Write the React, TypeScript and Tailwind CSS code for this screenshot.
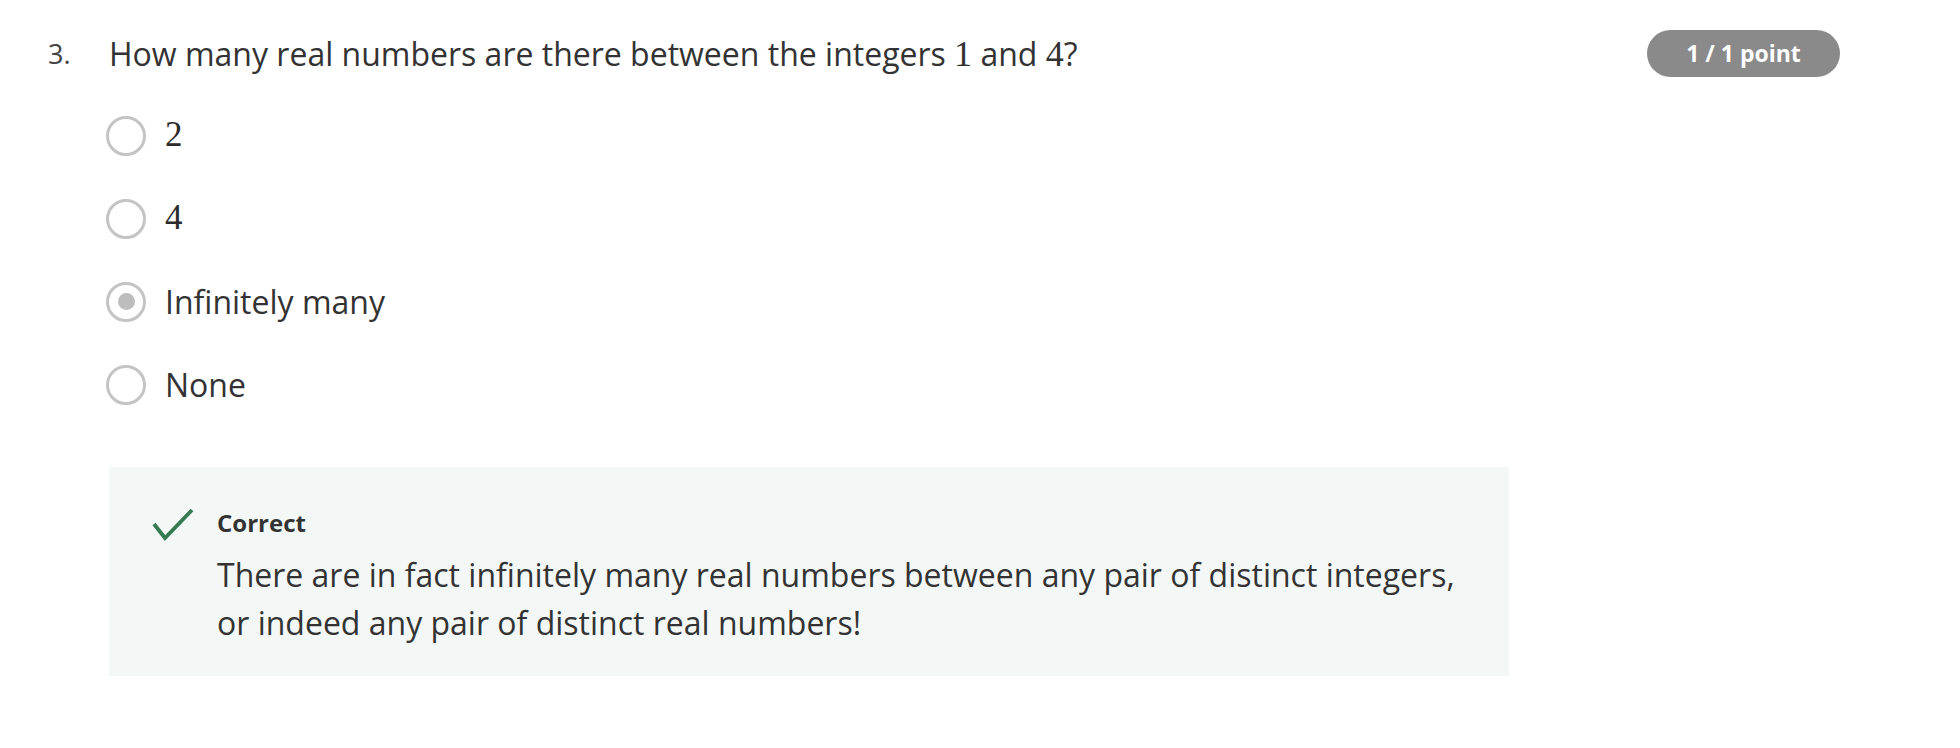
const options = [
  { label: '2', math: true, selected: false },
  { label: '4', math: true, selected: false },
  { label: 'Infinitely many', math: false, selected: true },
  { label: 'None', math: false, selected: false },
];

function Radio({ selected }: { selected: boolean }) {
  return (
    <span className="flex h-[40px] w-[40px] shrink-0 items-center justify-center rounded-full border-[3.5px] border-[#c4c4c4] bg-white">
      {selected && <span className="h-[17px] w-[17px] rounded-full bg-[#bdbdbd]" />}
    </span>
  );
}

function CheckMark() {
  return (
    <svg width="42" height="34" viewBox="0 0 42 34" className="mt-[1px] shrink-0" fill="none">
      <polyline points="2,16 13,30 40,2" stroke="#357a52" strokeWidth="3.8" />
    </svg>
  );
}

export default function App() {
  return (
    <div className="min-h-screen bg-white font-['Open_Sans',sans-serif] text-[#333333]">
      <div className="flex pl-[48px] pr-[120px] pt-[30px]">
        <div className="w-[61px] shrink-0 text-[27px] leading-[48px] text-[#444444]">3.</div>

        <div className="flex-1">
          <div className="flex items-start justify-between">
            <p className="text-[32px] leading-[48px]">
              How many real numbers are there between the integers{' '}
              <span className="font-['Liberation_Serif',serif] text-[36px]">1</span> and{' '}
              <span className="font-['Liberation_Serif',serif] text-[36px]">4</span>?
            </p>
            <span className="flex h-[47px] w-[193px] items-center justify-center rounded-full bg-[#8a8a8a] text-[23px] font-bold text-white">
              1 / 1 point
            </span>
          </div>

          <ul className="ml-[-3px] mt-[16px]">
            {options.map((o) => (
              <li key={o.label} className="flex h-[83px] items-center gap-[19px]">
                <Radio selected={o.selected} />
                {o.math ? (
                  <span className="font-['Liberation_Serif',serif] text-[35px] text-[#2b2b2b]">{o.label}</span>
                ) : (
                  <span className="text-[32px]">{o.label}</span>
                )}
              </li>
            ))}
          </ul>

          <div className="mt-[41px] flex w-[1400px] gap-[23px] bg-[#f3f8f6] pb-[29px] pl-[43px] pr-[40px] pt-[40px]">
            <CheckMark />
            <div>
              <p className="text-[24px] font-bold leading-[32px]">Correct</p>
              <p className="mt-[12px] text-[32px] leading-[48px]">
                There are in fact infinitely many real numbers between any pair of distinct integers, or indeed any
                pair of distinct real numbers!
              </p>
            </div>
          </div>
        </div>
      </div>
    </div>
  );
}
